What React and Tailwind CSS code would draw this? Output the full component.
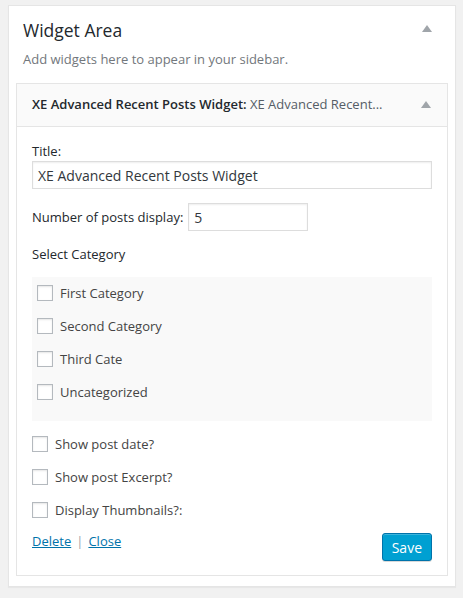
import React from "react";

const Arrow = () => (
  <svg width="10" height="7" viewBox="0 0 10 7" className="block">
    <path d="M5 0 L10 7 L0 7 Z" fill="#a0a5aa" />
  </svg>
);

const Box = () => (
  <span className="block w-4 h-4 shrink-0 bg-white border border-[#b4b9be] shadow-[inset_0_1px_2px_rgba(0,0,0,0.1)]" />
);

export default function App() {
  const cats = ["First Category", "Second Category", "Third Cate", "Uncategorized"];
  const opts = ["Show post date?", "Show post Excerpt?", "Display Thumbnails?:"];
  return (
    <div
      className="min-h-[598px] bg-[#f1f1f1] pt-[5px] pl-[8px] text-[13px] text-[#444]"
      style={{ fontFamily: '"Open Sans", "Noto Sans", sans-serif' }}
    >
      <div className="w-[448px] bg-white border border-[#e5e5e5] shadow-[0_1px_1px_rgba(0,0,0,0.04)] px-[7px] pb-[10px]">
        <div className="flex items-center justify-between pt-[10px] px-[7px]">
          <h2 className="text-[17.5px] leading-[28px] font-normal text-[#23282d]">Widget Area</h2>
          <span className="mr-[9px] -mt-[4px]"><Arrow /></span>
        </div>
        <p className="mt-[5px] px-[7px] leading-[20px] text-[#72777c]">
          Add widgets here to appear in your sidebar.
        </p>
        <div className="mt-[14px] border border-[#e5e5e5]">
          <div className="h-[43px] bg-[#fafafa] border-b border-[#e5e5e5] flex items-center justify-between pl-[15px] pr-[16px]">
            <div className="text-[13px] text-[#23282d] whitespace-nowrap">
              <span className="font-semibold">XE Advanced Recent Posts Widget:</span>
              <span className="text-[#555d66] font-normal"> XE Advanced Recent...</span>
            </div>
            <span className="-mt-[1px]"><Arrow /></span>
          </div>
          <div className="px-[15px] pt-[14px] pb-[14px]">
            <div className="leading-[20px] text-[#23282d]">Title:</div>
            <div className="h-[28px] w-[400px] border border-[#ddd] shadow-[inset_0_1px_2px_rgba(0,0,0,0.07)] flex items-center pl-[5px] text-[14px] text-[#32373c]">
              XE Advanced Recent Posts Widget
            </div>
            <div className="mt-[14px] flex items-center gap-[5px]">
              <span className="leading-[20px] text-[#23282d]">Number of posts display:</span>
              <div className="h-[28px] w-[120px] border border-[#ddd] shadow-[inset_0_1px_2px_rgba(0,0,0,0.07)] flex items-center pl-[5px] text-[14px] text-[#32373c]">
                5
              </div>
            </div>
            <div className="mt-[13px] leading-[20px] text-[#23282d]">Select Category</div>
            <div className="mt-[13px] w-[400px] bg-[#f9f9f9] pt-[8px] pb-[21px] pl-[5px] flex flex-col gap-[17px]">
              {cats.map((c) => (
                <div key={c} className="h-4 flex items-center gap-[7px]">
                  <Box />
                  <span className="leading-[20px] text-[#444]">{c}</span>
                </div>
              ))}
            </div>
            <div className="mt-[15px] flex flex-col gap-[17px]">
              {opts.map((c) => (
                <div key={c} className="h-4 flex items-center gap-[7px]">
                  <Box />
                  <span className="leading-[20px] text-[#444]">{c}</span>
                </div>
              ))}
            </div>
            <div className="mt-[13px] flex items-start justify-between">
              <div className="leading-[20px] flex gap-[5px]">
                <span className="text-[#0073aa] underline">Delete</span>
                <span className="text-[#a0a5aa]">|</span>
                <span className="text-[#0073aa] underline">Close</span>
              </div>
              <div className="mt-[2px] h-[28px] px-[9px] flex items-center rounded-[3px] bg-[#00a0d2] border border-[#0073aa] shadow-[inset_0_1px_0_rgba(120,200,230,0.5),0_1px_0_rgba(0,0,0,0.15)] text-white text-[14px]">
                Save
              </div>
            </div>
          </div>
        </div>
      </div>
    </div>
  );
}
